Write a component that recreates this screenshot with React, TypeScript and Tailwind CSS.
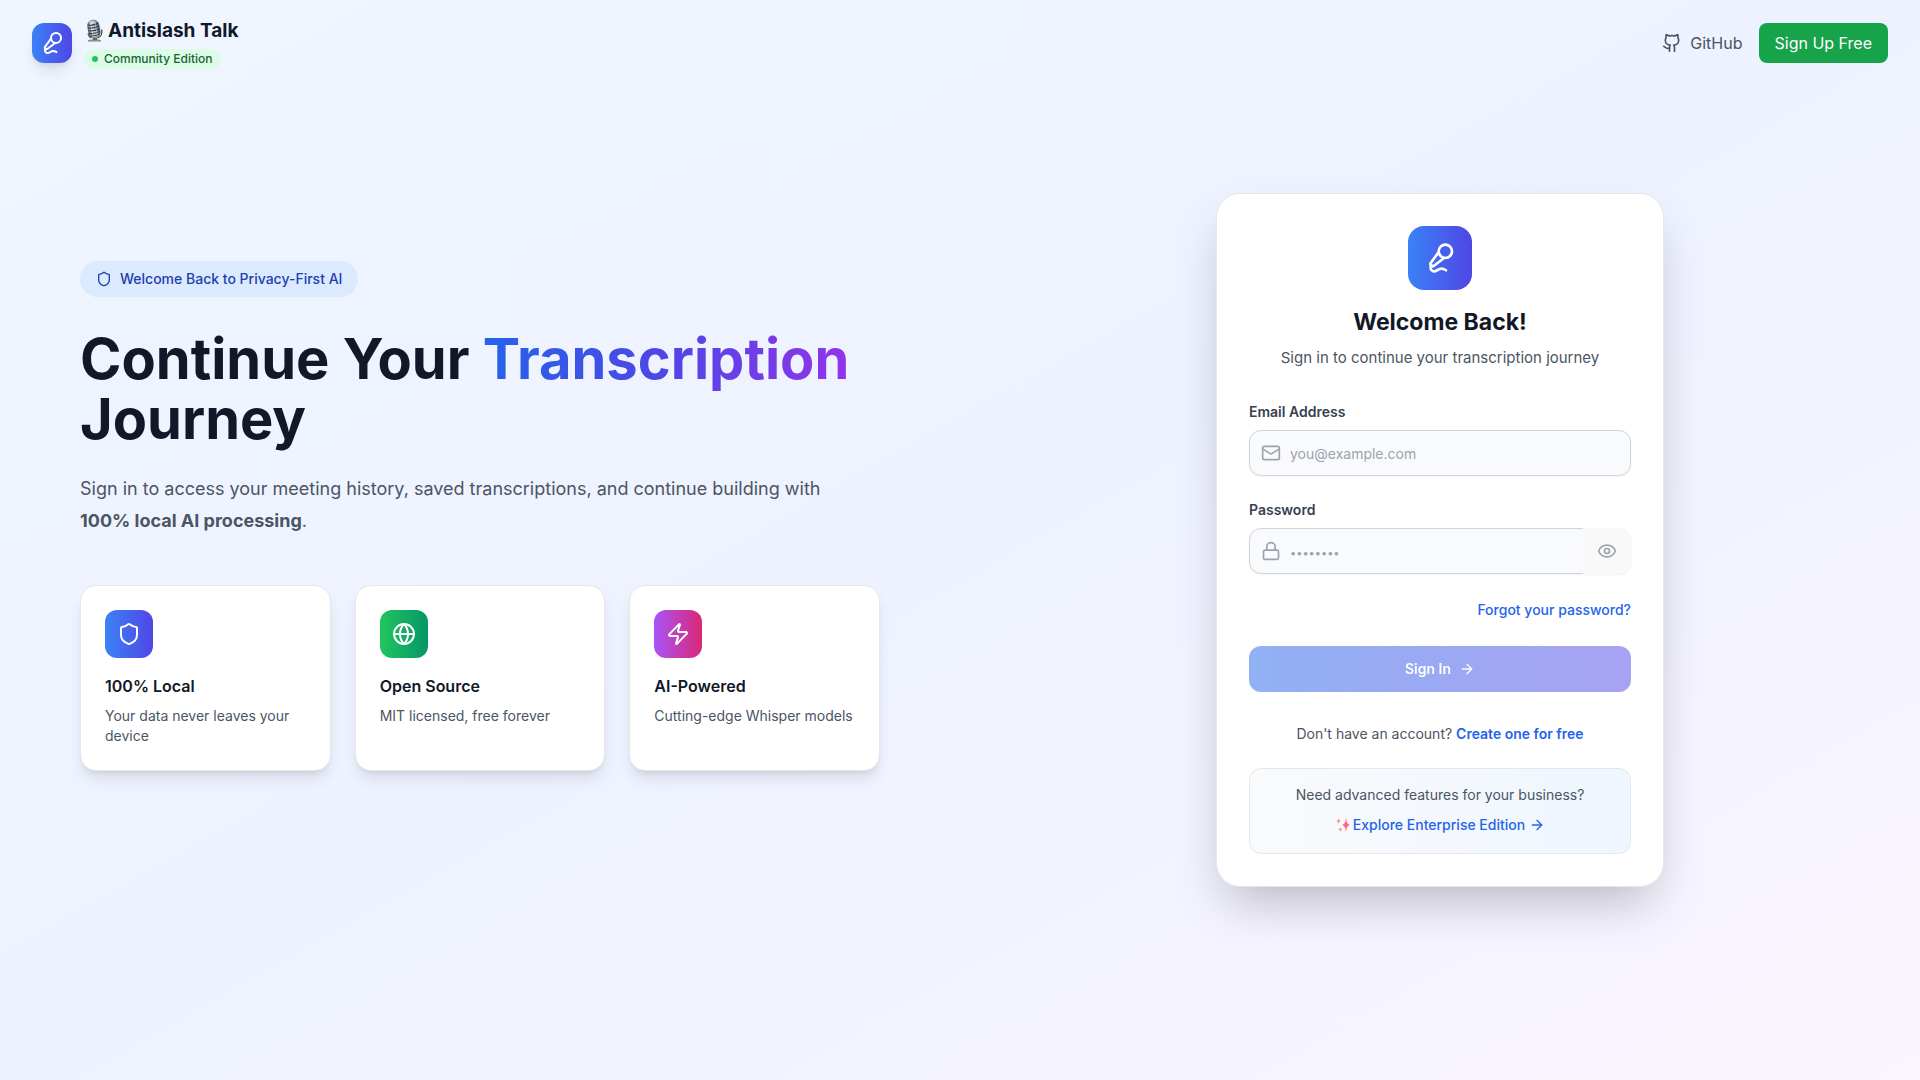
import { ArrowRight, Eye, Github, Globe, Lock, Mail, MicVocal, Shield, Zap } from "lucide-react";
import type { LucideIcon } from "lucide-react";

type Feature = { title: string; text: string; icon: LucideIcon; tile: string };

const features: Feature[] = [
  { title: "100% Local", text: "Your data never leaves your device", icon: Shield, tile: "from-[#3b82f6] to-[#4f46e5]" },
  { title: "Open Source", text: "MIT licensed, free forever", icon: Globe, tile: "from-[#22c55e] to-[#059669]" },
  { title: "AI-Powered", text: "Cutting-edge Whisper models", icon: Zap, tile: "from-[#a855f7] to-[#db2777]" },
];

function StudioMic() {
  return (
    <svg viewBox="0 0 20 24" className="h-6 w-5" role="img" aria-label="Studio microphone">
      <defs>
        <linearGradient id="mic-body" x1="0" x2="1" y1="0" y2="0">
          <stop offset="0" stopColor="#6b7280" />
          <stop offset="0.45" stopColor="#dfe5ea" />
          <stop offset="1" stopColor="#4b5563" />
        </linearGradient>
      </defs>
      <path d="M17.6 10.5c1 4-.6 7.300-3.800 8.300M4 14.500c.6 2 1.600 3.600 3.200 4.300" fill="none" stroke="#4b4640" strokeWidth="1.300" />
      <path d="M9 18.500h4l.6 2.600H8.300z" fill="#6b6259" />
      <path d="M5.200 20.800h10.600q1.200.2 1.200 1.700H4q0-1.500 1.200-1.700z" fill="#7c736a" />
      <path d="M5.500 22h10" stroke="#d6d3cf" strokeWidth="0.600" />
      <g transform="rotate(-10 10 10)">
        <rect x="4.200" y="1.200" width="11.400" height="17.600" rx="5.200" fill="url(#mic-body)" stroke="#4b5563" strokeWidth="0.600" />
        <path d="M5 5.200q5 1.600 10 0M4.500 8q5.400 1.600 10.800 0M4.500 10.800q5.400 1.600 10.800 0M4.500 13.500q5.400 1.600 10.800 0M5.500 16.200q4.500 1.200 9 0" fill="none" stroke="#2f3640" strokeWidth="1.200" />
        <path d="M7.600 2v16M12.200 2v16" stroke="#f3f4f6" strokeWidth="0.600" opacity="0.700" />
      </g>
    </svg>
  );
}

function Sparkles() {
  return (
    <svg viewBox="0 0 16 16" className="mr-0.5 size-4" role="img" aria-label="Sparkles">
      <path d="M11 0.500c.4 4.600 1.300 6.700 4.300 7.500-3 .8-3.900 2.900-4.300 7.500-.4-4.600-1.300-6.700-4.300-7.500 3-.8 3.900-2.900 4.300-7.500z" fill="#f9688f" />
      <path d="M3.600 0.800c.2 2.100.9 3 2.700 3.200-1.800.3-2.500 1.200-2.700 3.200-.2-2-.9-2.900-2.700-3.200 1.800-.2 2.500-1.100 2.700-3.200z" fill="#fb9a6a" />
      <path d="M5.400 9.400c.2 2.100.9 2.800 2.500 3.100-1.600.3-2.300 1-2.500 3.100-.2-2.100-.9-2.800-2.500-3.100 1.600-.3 2.300-1 2.500-3.100z" fill="#fb9a6a" />
    </svg>
  );
}

function Header() {
  return (
    <header className="flex items-center justify-between px-8 py-[17px]">
      <div className="flex items-center gap-3">
        <div className="flex size-10 items-center justify-center rounded-xl bg-linear-to-r/srgb from-[#3b82f6] to-[#4f46e5] text-white shadow-lg">
          <MicVocal className="size-6" />
        </div>
        <div className="flex flex-col items-start">
          <div className="flex items-center gap-1 text-[19px] leading-7 font-bold text-[#111827]">
            <StudioMic />
            Antislash Talk
          </div>
          <span className="mt-1 inline-flex items-center rounded-full bg-[#dcfce7] px-2 py-0.5 text-xs leading-4 font-medium text-[#166534]">
            <span className="mr-1.5 size-1.5 rounded-full bg-[#22c55e]" />
            Community Edition
          </span>
        </div>
      </div>
      <nav className="flex items-center gap-4 text-base">
        <a href="#github" className="flex items-center gap-2 text-[#4b5563]">
          <Github className="size-5" />
          GitHub
        </a>
        <a href="#signup" className="rounded-lg bg-[#16a34a] px-4 py-2 text-white">
          Sign Up Free
        </a>
      </nav>
    </header>
  );
}

function Hero() {
  return (
    <section className="px-20 pb-12">
      <div className="inline-flex items-center rounded-full bg-[#dbeafe] px-4 py-2 text-sm font-medium text-[#1e40af]">
        <Shield className="mr-2 size-4" />
        Welcome Back to Privacy-First AI
      </div>
      <h1 className="mt-8 text-[56px] leading-[60px] font-bold text-[#111827]">
        Continue Your{" "}
        <span className="bg-linear-to-r/srgb from-[#2563eb] via-[#4f46e5] to-[#9333ea] bg-clip-text text-transparent">
          Transcription
        </span>{" "}
        Journey
      </h1>
      <p className="mt-6 text-lg leading-8 text-[#4b5563]">
        Sign in to access your meeting history, saved transcriptions, and continue building with{" "}
        <strong className="font-bold whitespace-nowrap">100% local AI processing</strong>.
      </p>
      <div className="mt-12 grid grid-cols-3 gap-6">
        {features.map(({ title, text, icon: Icon, tile }) => (
          <article key={title} className="rounded-2xl border border-[#e5e7eb] bg-white p-6 shadow-lg">
            <div className={"flex size-12 items-center justify-center rounded-xl bg-linear-to-r/srgb text-white " + tile}>
              <Icon className="size-6" />
            </div>
            <h3 className="mt-4 text-base font-semibold text-[#111827]">{title}</h3>
            <p className="mt-2 text-sm text-[#4b5563]">{text}</p>
          </article>
        ))}
      </div>
    </section>
  );
}

const inputClass =
  "h-[46px] w-full rounded-xl border border-[#d1d5db] bg-[#f9fafb] pl-10 text-sm text-[#111827] shadow-xs placeholder:text-[#9ca3af]";

function SignInCard() {
  return (
    <section className="w-full max-w-md rounded-3xl border border-[#e5e7eb] bg-white p-8 shadow-2xl">
      <div className="flex flex-col items-center">
        <div className="flex size-16 items-center justify-center rounded-2xl bg-linear-to-r/srgb from-[#3b82f6] to-[#4f46e5] text-white">
          <MicVocal className="size-8" />
        </div>
        <h2 className="mt-4 text-[23px] leading-8 font-bold text-[#111827]">Welcome Back!</h2>
        <p className="mt-2 text-[15px] leading-6 text-[#4b5563]">Sign in to continue your transcription journey</p>
      </div>

      <form className="mt-8" onSubmit={(e) => e.preventDefault()}>
        <label htmlFor="email" className="block text-sm font-semibold text-[#374151]">
          Email Address
        </label>
        <div className="relative mt-2">
          <Mail className="absolute inset-y-0 left-3 my-auto size-5 text-[#9ca3af]" />
          <input id="email" type="email" placeholder="you@example.com" className={inputClass} />
        </div>

        <label htmlFor="password" className="mt-6 block text-sm font-semibold text-[#374151]">
          Password
        </label>
        <div className="relative mt-2">
          <Lock className="absolute inset-y-0 left-3 my-auto size-5 text-[#9ca3af]" />
          <input id="password" type="password" placeholder="••••••••" className={inputClass + " placeholder:text-[11px]"} />
          <button
            type="button"
            aria-label="Show password"
            className="absolute inset-y-0 right-0 flex w-12 items-center justify-center rounded-r-xl bg-[#f9f9f9] text-[#9ca3af]"
          >
            <Eye className="size-5" />
          </button>
        </div>

        <div className="mt-6 flex justify-end text-sm leading-6 font-medium">
          <a href="#forgot" className="text-[#2563eb]">
            Forgot your password?
          </a>
        </div>

        <button
          type="submit"
          disabled
          className="mt-6 flex h-[46px] w-full items-center justify-center rounded-xl bg-linear-to-r/srgb from-[#2563eb] to-[#4f46e5] text-sm font-semibold text-white opacity-50"
        >
          Sign In
          <ArrowRight className="ml-2 size-4" />
        </button>
      </form>

      <p className="mt-8 text-center text-sm text-[#4b5563]">
        Don't have an account?{" "}
        <a href="#create" className="font-semibold text-[#2563eb]">
          Create one for free
        </a>
      </p>

      <div className="mt-6 flex flex-col items-center gap-2 rounded-xl border border-[#e5e7eb] bg-linear-to-r/srgb from-[#f9fafb] to-[#eff6ff] p-4 text-sm">
        <p className="text-[#4b5563]">Need advanced features for your business?</p>
        <a href="#enterprise" className="inline-flex items-center leading-6 font-medium text-[#2563eb]">
          <Sparkles />
          Explore Enterprise Edition
          <ArrowRight className="ml-1 size-4" />
        </a>
      </div>
    </section>
  );
}

export default function App() {
  return (
    <div className="flex min-h-screen flex-col bg-linear-to-br/srgb from-[#eff6ff] via-[#eef2ff] to-[#faf5ff] font-['Inter',sans-serif]">
      <Header />
      <main className="grid flex-1 grid-cols-2 items-center pb-[86px]">
        <Hero />
        <div className="flex justify-center">
          <SignInCard />
        </div>
      </main>
    </div>
  );
}
